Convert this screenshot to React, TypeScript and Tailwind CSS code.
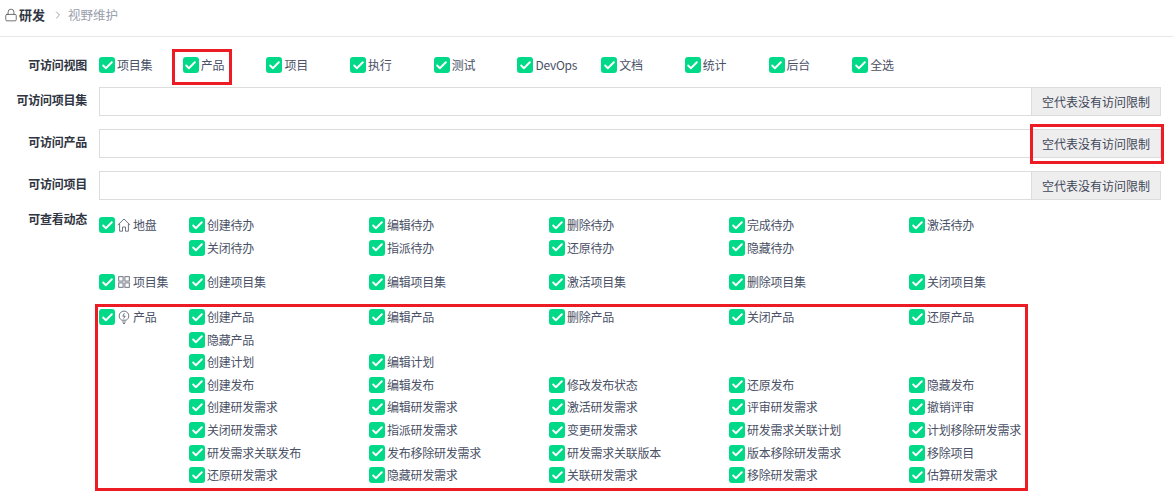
import { Check, ChevronRight, Lock } from "lucide-react";
import type { ReactNode } from "react";

const views = ["项目集", "产品", "项目", "执行", "测试", "DevOps", "文档", "统计", "后台", "全选"];

const productRows = [
  ["创建产品", "编辑产品", "删除产品", "关闭产品", "还原产品"],
  ["隐藏产品"],
  ["创建计划", "编辑计划"],
  ["创建发布", "编辑发布", "修改发布状态", "还原发布", "隐藏发布"],
  ["创建研发需求", "编辑研发需求", "激活研发需求", "评审研发需求", "撤销评审"],
  ["关闭研发需求", "指派研发需求", "变更研发需求", "研发需求关联计划", "计划移除研发需求"],
  ["研发需求关联发布", "发布移除研发需求", "研发需求关联版本", "版本移除研发需求", "移除项目"],
  ["还原研发需求", "隐藏研发需求", "关联研发需求", "移除研发需求", "估算研发需求"],
];

function Box() {
  return (
    <span className="flex h-4 w-4 shrink-0 items-center justify-center rounded-[3px] bg-[#00da88]">
      <Check className="h-[13px] w-[13px] text-white" strokeWidth={3.5} />
    </span>
  );
}

function Item({ label }: { label: string }) {
  return (
    <div className="flex w-[180px] items-center gap-[2px]">
      <Box />
      <span className="tracking-[-0.02em]">{label}</span>
    </div>
  );
}

function Limit({ label, mt }: { label: string; mt: string }) {
  return (
    <div className={`flex items-center ${mt}`}>
      <div className="w-[87px] pb-[3px] text-right font-bold tracking-[-0.02em] text-[#2f3542]">{label}</div>
      <div className="ml-3 flex h-[29px] w-[1062px] border border-[#dcdcdc]">
        <div className="flex-1 bg-white" />
        <div className="flex w-[129px] items-center justify-center border-l border-[#dcdcdc] bg-[#eeeeee] text-[#3f4658]">
          空代表没有访问限制
        </div>
      </div>
    </div>
  );
}

function HomeIcon() {
  return (
    <svg viewBox="0 0 14 14" className="h-[14px] w-[14px]" fill="none" stroke="currentColor" strokeWidth="0.9">
      <path d="M0.8 7 7 1l6.2 6M2.6 5.6v7.6h2.9V9h3v4.2h2.9V5.6" />
    </svg>
  );
}

function GridIcon() {
  return (
    <svg viewBox="0 0 12 12" className="h-3 w-3" fill="none" stroke="currentColor" strokeWidth="0.9">
      <rect x="0.7" y="0.7" width="4.4" height="4.4" />
      <rect x="6.9" y="0.7" width="4.4" height="4.4" />
      <rect x="0.7" y="6.9" width="4.4" height="4.4" />
      <rect x="6.9" y="6.9" width="4.4" height="4.4" />
    </svg>
  );
}

function BulbIcon() {
  return (
    <svg viewBox="0 0 12 14" className="h-[14px] w-3" fill="none" stroke="currentColor" strokeWidth="0.9">
      <path d="M3.8 10.2C2.2 9.3 1.2 7.7 1.2 5.9a4.8 4.8 0 0 1 9.6 0c0 1.8-1 3.4-2.6 4.3zM4.2 12h3.6M5 13.5h2" />
      <path d="M6.4 3.2 4.8 6.2h2.4L5.6 8.6" />
    </svg>
  );
}

function Group({ icon, name, rows, mt }: { icon: ReactNode; name: string; rows: string[][]; mt: string }) {
  return (
    <div className={`flex ${mt}`}>
      <div className="flex h-[22.6px] w-[90px] items-center">
        <Box />
        <span className="ml-[2px] flex w-[14px] justify-center text-[#5f6675]">{icon}</span>
        <span className="ml-[2px] tracking-[-0.02em]">{name}</span>
      </div>
      <div>
        {rows.map((row) => (
          <div key={row[0]} className="flex h-[22.6px] items-center">
            {row.map((label) => (
              <Item key={label} label={label} />
            ))}
          </div>
        ))}
      </div>
    </div>
  );
}

export default function App() {
  return (
    <div
      className="relative h-[495px] w-[1173px] overflow-hidden bg-white text-xs text-[#4a5166]"
      style={{ fontFamily: '"Noto Sans CJK SC", "Open Sans", sans-serif' }}
    >
      <div className="flex h-[37px] items-center border-b border-[#e8e8e8] pb-[6px] pl-1">
        <Lock className="h-[14px] w-[14px] text-[#555]" strokeWidth={1.4} />
        <span className="ml-[1px] text-[13px] font-bold text-[#2f3542]">研发</span>
        <ChevronRight className="ml-[7px] h-3 w-3 text-[#9aa0ad]" />
        <span className="ml-[4px] text-[12.5px] text-[#9aa0ad]">视野维护</span>
      </div>

      <div className="mt-[19px] flex h-[18px] items-center">
        <div className="w-[87px] text-right font-bold tracking-[-0.02em] text-[#2f3542]">可访问视图</div>
        <div className="ml-3 flex">
          {views.map((v) => (
            <div key={v} className="flex w-[83.7px] items-center gap-[2px]">
              <Box />
              <span className="tracking-[-0.02em]">{v}</span>
            </div>
          ))}
        </div>
      </div>

      <Limit label="可访问项目集" mt="mt-[13px]" />
      <Limit label="可访问产品" mt="mt-[13px]" />
      <Limit label="可访问项目" mt="mt-[13px]" />

      <div className="mt-[11px] flex">
        <div className="w-[87px] text-right font-bold tracking-[-0.02em] text-[#2f3542]">可查看动态</div>
        <div className="ml-3 pt-[3px]">
          <Group
            icon={<HomeIcon />}
            name="地盘"
            mt="mt-0"
            rows={[
              ["创建待办", "编辑待办", "删除待办", "完成待办", "激活待办"],
              ["关闭待办", "指派待办", "还原待办", "隐藏待办"],
            ]}
          />
          <Group
            icon={<GridIcon />}
            name="项目集"
            mt="mt-3"
            rows={[["创建项目集", "编辑项目集", "激活项目集", "删除项目集", "关闭项目集"]]}
          />
          <Group icon={<BulbIcon />} name="产品" mt="mt-3" rows={productRows} />
        </div>
      </div>

      {/* red annotation boxes */}
      <div className="absolute left-[172px] top-[49px] h-[36px] w-[60px] border-[3px] border-[#ed1c24]" />
      <div className="absolute left-[1030px] top-[124px] h-[40px] w-[134px] border-[3px] border-[#ed1c24]" />
      <div className="absolute left-[95px] top-[304px] h-[187px] w-[933px] border-[3px] border-[#ed1c24]" />
    </div>
  );
}
